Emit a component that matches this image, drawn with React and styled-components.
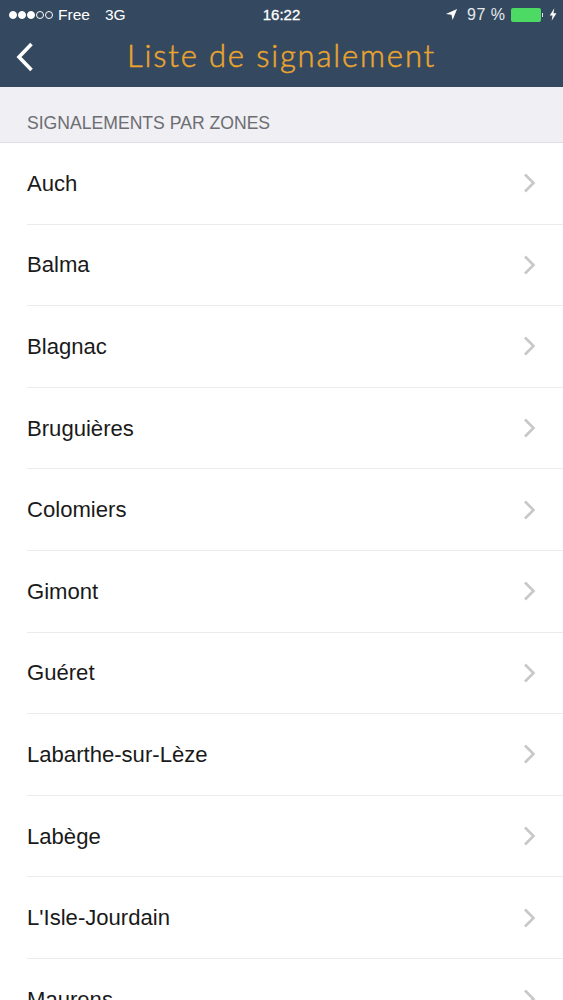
import React from "react";
import styled, { createGlobalStyle } from "styled-components";

const zones = [
  "Auch",
  "Balma",
  "Blagnac",
  "Bruguières",
  "Colomiers",
  "Gimont",
  "Guéret",
  "Labarthe-sur-Lèze",
  "Labège",
  "L'Isle-Jourdain",
  "Maurens",
];

const App = () => {
  return (
    <Screen>
      <GlobalStyle />
      <Header>
        <StatusBar>
          <StatusLeft>
            <Signal>
              <Dot $on />
              <Dot $on />
              <Dot $on />
              <Dot />
              <Dot />
            </Signal>
            <Carrier>Free</Carrier>
            <Network>3G</Network>
          </StatusLeft>
          <Clock>16:22</Clock>
          <StatusRight>
            <svg width="13" height="13" viewBox="0 0 14 14">
              <path d="M13 1 L1 6.4 L7 7.4 L8.2 13 Z" fill="#ffffff" />
            </svg>
            <Percent>97 %</Percent>
            <Battery />
            <BatteryTip />
            <svg width="8" height="13" viewBox="0 0 9 14">
              <path d="M6 0 L0.8 8 L4 8 L3 14 L8.4 5.6 L5 5.6 Z" fill="#ffffff" />
            </svg>
          </StatusRight>
        </StatusBar>
        <NavBar>
          <BackIcon width="20" height="32" viewBox="0 0 20 32">
            <path
              d="M16.5 3 L4 16 L16.5 29"
              fill="none"
              stroke="#ffffff"
              strokeWidth="3.6"
            />
          </BackIcon>
          <Title>Liste de signalement</Title>
        </NavBar>
      </Header>
      <SectionTitle>SIGNALEMENTS PAR ZONES</SectionTitle>
      <List>
        {zones.map((zone) => (
          <Row key={zone}>
            <RowInner>
              <RowLabel>{zone}</RowLabel>
              <svg width="14" height="20" viewBox="0 0 14 20">
                <path
                  d="M2 1.5 L10.5 10 L2 18.5"
                  fill="none"
                  stroke="#c8c8cb"
                  strokeWidth="2.6"
                />
              </svg>
            </RowInner>
          </Row>
        ))}
      </List>
    </Screen>
  );
};

const GlobalStyle = createGlobalStyle`
  html, body {
    margin: 0;
    padding: 0;
    background: #ffffff;
    overflow: hidden;
  }
`;
const Screen = styled.div`
  width: 563px;
  height: 1000px;
  overflow: hidden;
  font-family: "Liberation Sans", Arial, sans-serif;
`;
const Header = styled.div`
  height: 87px;
  background-color: #34495f;
  color: #ffffff;
`;
const StatusBar = styled.div`
  height: 29px;
  display: grid;
  grid-template-columns: 1fr auto 1fr;
  align-items: center;
  font-size: 15.5px;
`;
const StatusLeft = styled.div`
  display: flex;
  align-items: center;
  padding-left: 9px;
`;
const Signal = styled.div`
  display: flex;
  gap: 1px;
  margin-right: 5px;
`;
const Dot = styled.span`
  width: 8px;
  height: 8px;
  box-sizing: border-box;
  border-radius: 50%;
  border: 1px solid #ffffff;
  background-color: ${(props) => (props.$on ? "#ffffff" : "transparent")};
`;
const Carrier = styled.span`
  margin-right: 15px;
`;
const Network = styled.span``;
const Clock = styled.span`
  font-size: 15px;
  font-weight: 400;
  -webkit-text-stroke: 0.3px #ffffff;
`;
const StatusRight = styled.div`
  display: flex;
  align-items: center;
  justify-content: flex-end;
  padding-right: 6px;
`;
const Percent = styled.span`
  margin: 0 5px 0 9px;
  font-size: 16px;
  letter-spacing: 0.5px;
  color: #e4e9ec;
`;
const Battery = styled.div`
  width: 30px;
  height: 14px;
  border-radius: 2px;
  background-color: #4cd964;
`;
const BatteryTip = styled.div`
  width: 1.5px;
  height: 4px;
  margin: 0 6px 0 1px;
  background-color: #dfe5e8;
`;
const NavBar = styled.div`
  position: relative;
  height: 58px;
  display: flex;
  justify-content: center;
  padding-top: 6px;
  box-sizing: border-box;
`;
const BackIcon = styled.svg`
  position: absolute;
  left: 15px;
  top: 12px;
`;
const Title = styled.h1`
  margin: 0;
  font-family: Lato, "Noto Sans", sans-serif;
  font-size: 31px;
  line-height: 40px;
  font-weight: 300;
  letter-spacing: 1.85px;
  color: #eba52e;
  -webkit-text-stroke: 0.5px #eba52e;
`;
const SectionTitle = styled.div`
  height: 56px;
  box-sizing: border-box;
  padding: 26px 0 0 27px;
  background-color: #efeff4;
  border-bottom: 1px solid #dfdfe3;
  color: #6d6d72;
  font-size: 17.6px;
  line-height: 20px;
`;
const List = styled.div`
  background-color: #ffffff;
`;
const Row = styled.div`
  height: 81.6px;
  box-sizing: border-box;
  padding-left: 27px;
`;
const RowInner = styled.div`
  height: 100%;
  box-sizing: border-box;
  display: flex;
  align-items: center;
  justify-content: space-between;
  padding-right: 26px;
  border-bottom: 1px solid #ebebed;
`;
const RowLabel = styled.span`
  padding-top: 1px;
  font-size: 22.1px;
  color: #1a1a1a;
`;

export default App;
